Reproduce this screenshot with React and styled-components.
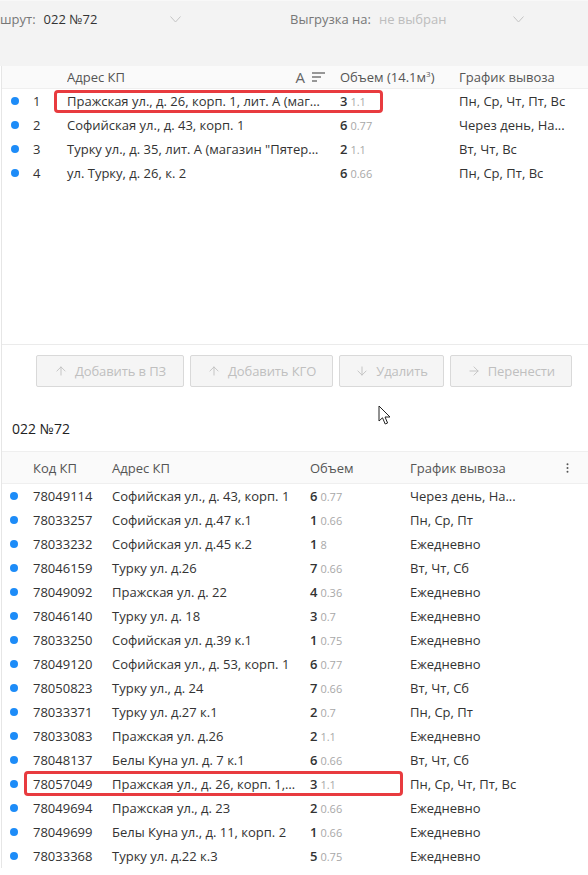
import React from "react";
import styled, { createGlobalStyle } from "styled-components";
import { ArrowUp, ArrowDown, ArrowRight } from "lucide-react";

const Global = createGlobalStyle`
  html, body {
    margin: 0;
    padding: 0;
    background: #ffffff;
  }
  body {
    font-family: "Open Sans", "Noto Sans", "Liberation Sans", sans-serif;
    font-size: 13px;
    color: #333333;
  }
  * {
    box-sizing: border-box;
  }
`;

const Page = styled.div`
  position: relative;
  width: 588px;
  height: 875px;
  overflow: hidden;
  background: #ffffff;
`;

const TopBar = styled.div`
  display: flex;
  align-items: flex-start;
  height: 66px;
  padding-top: 8px;
  background: #f3f3f3;
  border-top: 1px solid #f8f8f8;
`;

const Field = styled.div`
  display: flex;
  align-items: center;
  height: 20px;
  width: ${(p) => p.$width}px;
`;

const FieldLabel = styled.span`
  color: #777777;
  margin-right: 8px;
`;

const FieldValue = styled.span`
  flex: 1;
  color: ${(p) => (p.$empty ? "#bdbdbd" : "#333333")};
`;

const ChevronBox = styled.span`
  display: flex;
  margin-right: ${(p) => p.$mr}px;
`;

const Chevron = () => (
  <svg width="11" height="7" viewBox="0 0 11 7">
    <path d="M0.5 0.5 L5.5 6 L10.5 0.5" fill="none" stroke="#c4c4c4" strokeWidth="1" />
  </svg>
);

const Panel = styled.div`
  border-left: 1px solid #e6e6e6;
  margin-left: 1px;
`;

const TopList = styled.div`
  height: 279px;
  border-bottom: 1px solid #ebebeb;
`;

const Row = styled.div`
  position: relative;
  display: grid;
  grid-template-columns: ${(p) => p.$cols};
  align-items: center;
  height: ${(p) => p.$h || 24}px;
`;

const HeadRow = styled(Row)`
  background: #fafafa;
  color: #555555;
  border-bottom: 1px solid #efefef;
  border-top: ${(p) => (p.$topLine ? "1px solid #efefef" : "none")};
`;

const Cell = styled.div`
  min-width: 0;
  grid-column: ${(p) => (p.$span ? `span ${p.$span}` : "auto")};
  padding-left: ${(p) => (p.$pl !== undefined ? p.$pl : 10)}px;
  padding-right: ${(p) => (p.$pr !== undefined ? p.$pr : 6)}px;
  white-space: nowrap;
  overflow: hidden;
  text-overflow: ellipsis;
  display: ${(p) => (p.$flex ? "flex" : "block")};
  align-items: center;
  justify-content: ${(p) => p.$justify || "flex-start"};
`;

const Dot = styled.span`
  display: block;
  width: 8px;
  height: 8px;
  border-radius: 50%;
  background: #1d8cf8;
  margin-left: ${(p) => p.$ml}px;
`;

const Amount = styled.span`
  font-weight: 600;
  color: #333333;
`;

const Weight = styled.span`
  font-size: 11px;
  color: #a8a8a8;
  margin-left: 3px;
`;

const HeadTitle = styled.span`
  flex: 1;
  overflow: hidden;
  text-overflow: ellipsis;
`;

const SortA = styled.span`
  font-size: 15px;
  color: #666666;
  margin-right: 6px;
`;

const Highlight = styled.div`
  position: absolute;
  left: ${(p) => p.$left}px;
  width: ${(p) => p.$width}px;
  top: ${(p) => p.$top}px;
  height: ${(p) => p.$height}px;
  border: 3px solid #e83b3f;
  border-radius: 4px;
  pointer-events: none;
`;

const ActionBar = styled.div`
  display: flex;
  justify-content: flex-end;
  gap: 6px;
  padding: 10px 16px 0 0;
`;

const ActionButton = styled.button`
  display: flex;
  align-items: center;
  gap: 7px;
  height: 32px;
  padding: 0 ${(p) => p.$px || 15}px;
  background: #f5f5f5;
  border: 1px solid #d9d9d9;
  border-radius: 2px;
  color: #bfbfbf;
  font-family: inherit;
  font-size: 13px;
  letter-spacing: -0.1px;
  cursor: not-allowed;
`;

const Title = styled.div`
  padding: 32px 10px 12px;
  font-size: 14px;
  line-height: 20px;
  color: #222222;
`;

const Cursor = styled.svg`
  position: absolute;
  left: 378px;
  top: 405px;
`;

const topCols = "25px 30px 273px 119px 1fr";
const bottomCols = "21px 79px 198px 100px 1fr 32px";

const topRows = [
  { n: 1, addr: "Пражская ул., д. 26, корп. 1, лит. А (магазин)", a: 3, w: "1.1", s: "Пн, Ср, Чт, Пт, Вс", mark: true },
  { n: 2, addr: "Софийская ул., д. 43, корп. 1", a: 6, w: "0.77", s: "Через день, На..." },
  { n: 3, addr: "Турку ул., д. 35, лит. А (магазин \"Пятерочка\")", a: 2, w: "1.1", s: "Вт, Чт, Вс" },
  { n: 4, addr: "ул. Турку, д. 26, к. 2", a: 6, w: "0.66", s: "Пн, Ср, Пт, Вс" },
];

const bottomRows = [
  ["78049114", "Софийская ул., д. 43, корп. 1", 6, "0.77", "Через день, На..."],
  ["78033257", "Софийская ул. д.47 к.1", 1, "0.66", "Пн, Ср, Пт"],
  ["78033232", "Софийская ул. д.45 к.2", 1, "8", "Ежедневно"],
  ["78046159", "Турку ул. д.26", 7, "0.66", "Вт, Чт, Сб"],
  ["78049092", "Пражская ул. д. 22", 4, "0.36", "Ежедневно"],
  ["78046140", "Турку ул. д. 18", 3, "0.7", "Ежедневно"],
  ["78033250", "Софийская ул. д.39 к.1", 1, "0.75", "Ежедневно"],
  ["78049120", "Софийская ул., д. 53, корп. 1", 6, "0.77", "Ежедневно"],
  ["78050823", "Турку ул., д. 24", 7, "0.66", "Вт, Чт, Сб"],
  ["78033371", "Турку ул. д.27 к.1", 2, "0.7", "Пн, Ср, Пт"],
  ["78033083", "Пражская ул. д.26", 2, "1.1", "Ежедневно"],
  ["78048137", "Белы Куна ул. д. 7 к.1", 6, "0.66", "Вт, Чт, Сб"],
  ["78057049", "Пражская ул., д. 26, корп. 1, лит. А (магазин)", 3, "1.1", "Пн, Ср, Чт, Пт, Вс", true],
  ["78049694", "Пражская ул., д. 23", 2, "0.66", "Ежедневно"],
  ["78049699", "Белы Куна ул., д. 11, корп. 2", 1, "0.66", "Ежедневно"],
  ["78033368", "Турку ул. д.22 к.3", 5, "0.75", "Ежедневно"],
];

const SortIcon = () => (
  <svg width="15" height="12" viewBox="0 0 15 12">
    <path d="M1 2 H14 M1 6 H10 M1 10 H6" stroke="#777777" strokeWidth="1.3" fill="none" />
  </svg>
);

const Kebab = () => (
  <svg width="4" height="14" viewBox="0 0 4 14">
    <circle cx="2" cy="2" r="1.3" fill="#555555" />
    <circle cx="2" cy="7" r="1.3" fill="#555555" />
    <circle cx="2" cy="12" r="1.3" fill="#555555" />
  </svg>
);

const App = () => {
  return (
    <Page>
      <Global />
      <TopBar>
        <Field $width={290}>
          <FieldLabel>шрут:</FieldLabel>
          <FieldValue>022 №72</FieldValue>
          <ChevronBox $mr={109}>
            <Chevron />
          </ChevronBox>
        </Field>
        <Field $width={298}>
          <FieldLabel>Выгрузка на:</FieldLabel>
          <FieldValue $empty>не выбран</FieldValue>
          <ChevronBox $mr={64}>
            <Chevron />
          </ChevronBox>
        </Field>
      </TopBar>

      <Panel>
        <TopList>
          <HeadRow $cols={topCols} $h={23}>
            <Cell />
            <Cell />
            <Cell $flex $pr={4}>
              <HeadTitle>Адрес КП</HeadTitle>
              <SortA>A</SortA>
              <SortIcon />
            </Cell>
            <Cell>
              Объем (14.1м<sup style={{ fontSize: 8 }}>3</sup>)
            </Cell>
            <Cell>График вывоза</Cell>
          </HeadRow>
          {topRows.map((r) => (
            <Row key={r.n} $cols={topCols}>
              <Cell $pl={0} $pr={0}>
                <Dot $ml={9} />
              </Cell>
              <Cell $pl={6}>{r.n}</Cell>
              <Cell>{r.addr}</Cell>
              <Cell>
                <Amount>{r.a}</Amount>
                <Weight>{r.w}</Weight>
              </Cell>
              <Cell $pr={2}>{r.s}</Cell>
              {r.mark && <Highlight $left={52} $width={329} $top={1} $height={23} />}
            </Row>
          ))}
        </TopList>

        <ActionBar>
          <ActionButton $px={17}>
            <ArrowUp size={14} strokeWidth={1.5} />
            Добавить в ПЗ
          </ActionButton>
          <ActionButton $px={16}>
            <ArrowUp size={14} strokeWidth={1.5} />
            Добавить КГО
          </ActionButton>
          <ActionButton $px={15}>
            <ArrowDown size={14} strokeWidth={1.5} />
            Удалить
          </ActionButton>
          <ActionButton $px={16}>
            <ArrowRight size={14} strokeWidth={1.5} />
            Перенести
          </ActionButton>
        </ActionBar>

        <Title>022 №72</Title>

        <HeadRow $cols={bottomCols} $h={33} $topLine>
          <Cell />
          <Cell>Код КП</Cell>
          <Cell>Адрес КП</Cell>
          <Cell>Объем</Cell>
          <Cell>График вывоза</Cell>
          <Cell $flex $justify="flex-end" $pr={19}>
            <Kebab />
          </Cell>
        </HeadRow>
        {bottomRows.map(([code, addr, a, w, s, mark]) => (
          <Row key={code} $cols={bottomCols}>
            <Cell $pl={0} $pr={0}>
              <Dot $ml={8} />
            </Cell>
            <Cell>{code}</Cell>
            <Cell $pr={2}>{addr}</Cell>
            <Cell>
              <Amount>{a}</Amount>
              <Weight>{w}</Weight>
            </Cell>
            <Cell $span={2} $pr={4}>
              {s}
            </Cell>
            {mark && <Highlight $left={22} $width={379} $top={-1} $height={25} />}
          </Row>
        ))}
      </Panel>

      <Cursor width="14" height="21" viewBox="0 0 14 21">
        <path
          d="M1 1 L1 16 L4.5 12.8 L7.2 19 L9.6 18 L7 12 L12 12 Z"
          fill="#ffffff"
          stroke="#222222"
          strokeWidth="1"
          strokeLinejoin="round"
        />
      </Cursor>
    </Page>
  );
};

export default App;
